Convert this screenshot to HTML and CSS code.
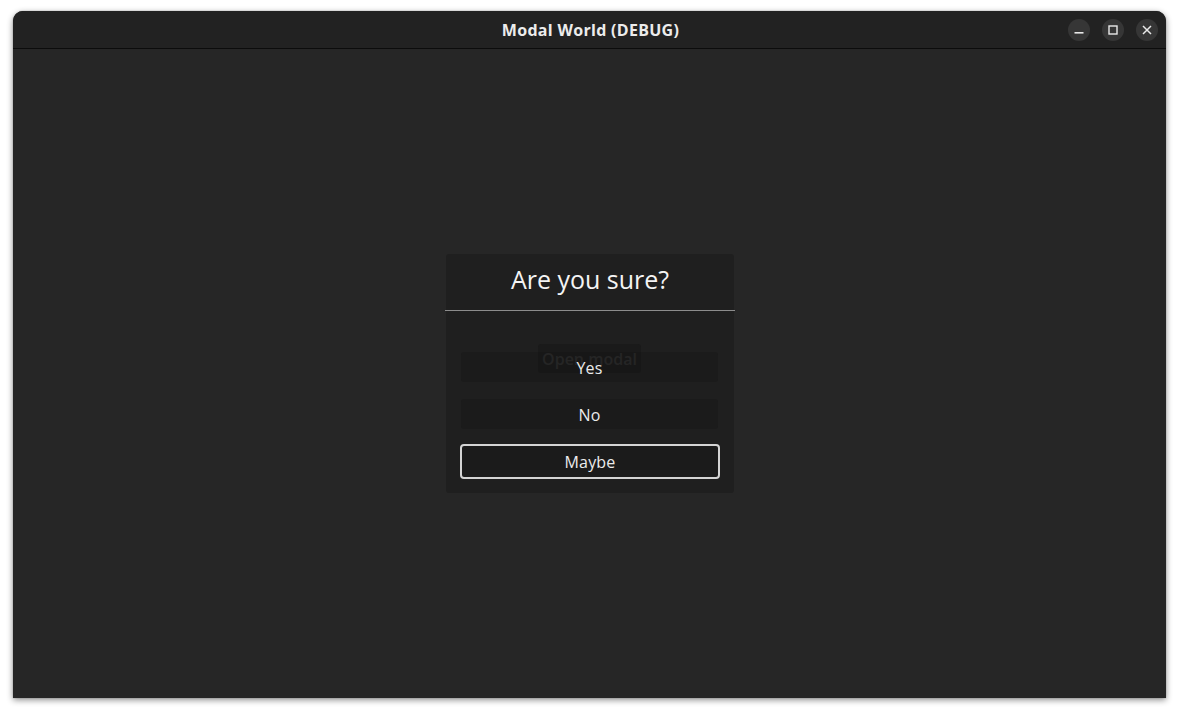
FILE: index.html
```html
<!DOCTYPE html>
<html>
<head>
<meta charset="utf-8">
<link rel="stylesheet" href="styles.css">
</head>
<body>
<div class="window">
  <div class="titlebar">
    <div class="title">Modal World (DEBUG)</div>
    <div class="controls">
      <div class="ctl"><svg width="10" height="10" viewBox="0 0 10 10"><rect x="0.5" y="7" width="9" height="1.6" fill="#e8e8e8"/></svg></div>
      <div class="ctl"><svg width="10" height="10" viewBox="0 0 10 10"><rect x="1" y="1" width="8" height="8" fill="none" stroke="#e8e8e8" stroke-width="1.4"/></svg></div>
      <div class="ctl"><svg width="10" height="10" viewBox="0 0 10 10"><path d="M1 1L9 9M9 1L1 9" stroke="#e8e8e8" stroke-width="1.5"/></svg></div>
    </div>
  </div>
  <div class="content">
    <div class="modal">
      <div class="modal-head">Are you sure?</div>
      <div class="rule"></div>
      <div class="modal-body">
        <div class="ghost">Open modal</div>
        <div class="btn">Yes</div>
        <div class="btn">No</div>
        <div class="btn focus">Maybe</div>
      </div>
    </div>
  </div>
</div>
</body>
</html>
```

FILE: styles.css
```css
html, body { margin: 0; padding: 0; background: #ffffff; }
body {
  font-family: "Open Sans", "Noto Sans", sans-serif;
  padding: 11px 14px 16px 13px;
  height: 714px;
  box-sizing: border-box;
}
.window {
  width: 1153px;
  height: 687px;
  display: flex;
  flex-direction: column;
  border-radius: 10px 10px 0 0;
  overflow: hidden;
  box-shadow: 0 2px 6px rgba(0,0,0,0.45), 0 0 1px rgba(0,0,0,0.5);
  background: #262626;
}
.titlebar {
  height: 37px;
  background: #222222;
  border-bottom: 1px solid #0c0c0c;
  display: flex;
  align-items: center;
  justify-content: center;
  position: relative;
  flex: none;
}
.title {
  color: #ececec;
  font-weight: 700;
  font-size: 16px;
  letter-spacing: 0.3px;
  padding-left: 2px;
}
.controls {
  position: absolute;
  right: 8px;
  top: 8px;
  display: flex;
  gap: 12px;
}
.ctl {
  width: 22px;
  height: 22px;
  border-radius: 50%;
  background: #363636;
  display: flex;
  align-items: center;
  justify-content: center;
}
.content {
  flex: 1;
  display: flex;
  align-items: center;
  justify-content: center;
  padding-left: 1px;
}
.modal {
  width: 288px;
  height: 239px;
  background: #1f1f1f;
  border-radius: 3px;
  display: flex;
  flex-direction: column;
}
.modal-head {
  height: 56px;
  display: flex;
  align-items: center;
  justify-content: center;
  color: #f4f4f4;
  font-size: 25px;
  font-weight: 500;
  padding-bottom: 7px;
  box-sizing: border-box;
}
.rule {
  height: 1px;
  background: #8c8c8c;
  margin: 0 -1px;
}
.modal-body {
  position: relative;
  padding: 41px 14px 0 14px;
  display: flex;
  flex-direction: column;
  gap: 17px;
}
.ghost {
  position: absolute;
  left: 92px;
  top: 33px;
  width: 103px;
  height: 29px;
  background: #1a1a1a;
  border-radius: 3px;
  color: #2f2f2f;
  font-size: 16px;
  font-weight: 600;
  display: flex;
  align-items: center;
  justify-content: center;
}
.btn {
  position: relative;
  margin: 0 2px 0 1px;
  height: 30px;
  box-sizing: border-box;
  padding-top: 2px;
  background: rgba(20,20,20,0.35);
  border-radius: 3px;
  color: #ebebeb;
  font-size: 16px;
  font-weight: 500;
  letter-spacing: 0.2px;
  display: flex;
  align-items: center;
  justify-content: center;
}
.btn.focus {
  margin: -2px 0 0 0;
  height: 35px;
  padding-top: 0;
  border: 2px solid #d4d4d4;
  background: #1b1b1b;
  border-radius: 4px;
}
```
